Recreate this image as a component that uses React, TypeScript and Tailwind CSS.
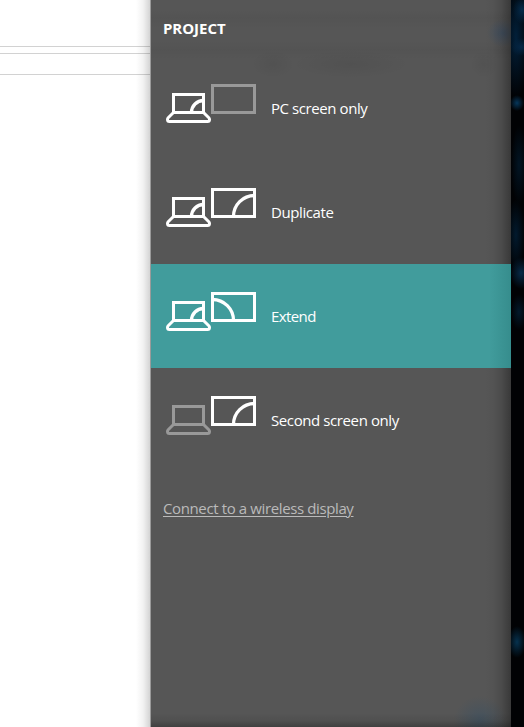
type Mode = "pc" | "duplicate" | "extend" | "second";

const options: { mode: Mode; label: string; tracking: string }[] = [
  { mode: "pc", label: "PC screen only", tracking: "tracking-[-0.42px]" },
  { mode: "duplicate", label: "Duplicate", tracking: "tracking-[-0.4px]" },
  { mode: "extend", label: "Extend", tracking: "tracking-[-0.6px]" },
  { mode: "second", label: "Second screen only", tracking: "tracking-[-0.4px]" },
];

function DisplayIcon({ mode }: { mode: Mode }) {
  const laptop = mode === "second" ? "#999999" : "#ffffff";
  const monitor = mode === "pc" ? "#999999" : "#ffffff";
  return (
    <svg width="90" height="39" viewBox="0 0 90 39" fill="none" strokeWidth="3" className="shrink-0">
      <g stroke={laptop}>
        <rect x="7.5" y="10.5" width="30" height="18" />
        <path d="M7.5 28.5 L2.2 33.8 Q1.5 34.5 1.5 35.5 Q1.5 37.5 3.5 37.5 H41.5 Q43.5 37.5 43.5 35.5 Q43.5 34.5 42.8 33.8 L37.5 28.5" />
        {mode !== "second" && <path d="M25.5 28.5 A12 12 0 0 1 37.5 16.5" strokeWidth="3.3" />}
      </g>
      <g stroke={monitor}>
        <rect x="46.5" y="1.5" width="42" height="27" />
        {mode === "extend" && <path d="M46.5 7.5 A21 21 0 0 1 67.5 28.5" strokeWidth="3.3" />}
        {(mode === "duplicate" || mode === "second") && (
          <path d="M67.5 28.5 A21 21 0 0 1 88.5 7.5" strokeWidth="3.3" />
        )}
      </g>
    </svg>
  );
}

function BrowserEdge() {
  return (
    <div className="grid w-[150px] shrink-0 bg-white">
      <div className="col-start-1 row-start-1 flex flex-col">
        <div className="h-[47px] border-b border-[#d2d2d2]" />
        <div className="h-[7px] border-b border-[#d2d2d2]" />
        <div className="h-[21px] border-b border-[#d2d2d2]" />
      </div>
      <div className="col-start-1 row-start-1 w-3.5 justify-self-end bg-[linear-gradient(to_right,rgba(0,0,0,0),rgba(0,0,0,0.05)_50%,rgba(0,0,0,0.17))]" />
    </div>
  );
}

function Wallpaper() {
  return (
    <div className="w-[13px] shrink-0 bg-[#010204] bg-[radial-gradient(ellipse_9px_14px_at_11px_10px,#052b4b,transparent),radial-gradient(ellipse_10px_9px_at_10px_47px,#052746,transparent),radial-gradient(ellipse_7px_8px_at_6px_103px,#06375b,transparent),radial-gradient(ellipse_14px_60px_at_5px_38px,#02203a,transparent),radial-gradient(ellipse_8px_40px_at_8px_165px,#021524,transparent),radial-gradient(ellipse_9px_36px_at_5px_235px,#021a2e,transparent),radial-gradient(ellipse_11px_16px_at_10px_273px,#072a48,transparent),radial-gradient(ellipse_8px_18px_at_8px_312px,#02192b,transparent),radial-gradient(ellipse_9px_16px_at_6px_642px,#06324f,transparent)]" />
  );
}

export default function App() {
  return (
    <div className="flex h-[727px] w-[524px] overflow-hidden bg-black font-['Segoe_UI','Open_Sans','Noto_Sans',sans-serif] text-[15px] text-white">
      <BrowserEdge />
      <main className="w-[361px] shrink-0 border-l border-[#9a9a9a] bg-[#565656] bg-[linear-gradient(to_left,rgba(0,0,0,0.34),rgba(0,0,0,0.12)_10px,rgba(0,0,0,0.03)_18px,transparent_26px),linear-gradient(to_top,rgba(0,0,0,0.26),rgba(0,0,0,0.08)_6px,transparent_14px),radial-gradient(ellipse_16px_14px_at_352px_33px,rgba(48,74,105,0.5),transparent),radial-gradient(ellipse_26px_24px_at_329px_720px,rgba(64,81,95,0.8),transparent),radial-gradient(ellipse_22px_14px_at_122px_64px,rgba(0,0,0,0.05),transparent),radial-gradient(ellipse_60px_14px_at_200px_64px,rgba(0,0,0,0.06),transparent),radial-gradient(ellipse_14px_14px_at_333px_64px,rgba(0,0,0,0.05),transparent),linear-gradient(to_bottom,transparent_10px,rgba(0,0,0,0.03)_18px,transparent_29px,transparent_40px,rgba(0,0,0,0.03)_50px,transparent_60px)]">
        <h1 className="flex h-14 items-center pb-px pl-3 text-[15px] leading-5 font-bold">
          <span className="tracking-[-0.05px]">PROJECT</span>
        </h1>
        <ul>
          {options.map(({ mode, label, tracking }) => (
            <li
              key={mode}
              className={
                mode === "extend"
                  ? "flex h-[104px] items-start gap-[15px] bg-[linear-gradient(to_right,#419c9c,#419c9c_94%,#368d8d)] pl-[15px] pt-7"
                  : "flex h-[104px] items-start gap-[15px] pl-[15px] pt-7"
              }
            >
              <DisplayIcon mode={mode} />
              <span className={`pt-3.5 leading-5 ${tracking}`}>{label}</span>
            </li>
          ))}
        </ul>
        <div className="pl-3 pt-[25px]">
          <a className="text-[#bababa] leading-5 tracking-[-0.38px] underline decoration-1 underline-offset-2">
            Connect to a wireless display
          </a>
        </div>
      </main>
      <Wallpaper />
    </div>
  );
}
